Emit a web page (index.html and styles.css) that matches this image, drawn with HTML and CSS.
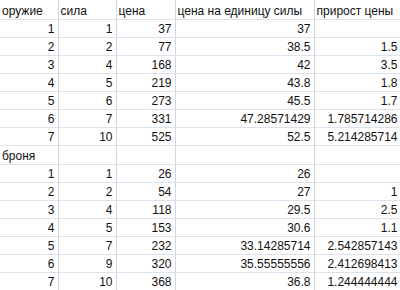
FILE: index.html
```html
<!DOCTYPE html>
<html>
<head>
<meta charset="utf-8">
<link rel="stylesheet" href="styles.css">
</head>
<body>
<table class="sheet">
  <colgroup>
    <col class="c1"><col class="c2"><col class="c3"><col class="c4"><col class="c5">
  </colgroup>
  <tbody>
    <tr class="head"><td class="t">оружие</td><td class="t">сила</td><td class="t">цена</td><td class="t">цена на единицу силы</td><td class="t">прирост цены</td></tr>
    <tr><td>1</td><td>1</td><td>37</td><td>37</td><td></td></tr>
    <tr><td>2</td><td>2</td><td>77</td><td>38.5</td><td>1.5</td></tr>
    <tr><td>3</td><td>4</td><td>168</td><td>42</td><td>3.5</td></tr>
    <tr><td>4</td><td>5</td><td>219</td><td>43.8</td><td>1.8</td></tr>
    <tr><td>5</td><td>6</td><td>273</td><td>45.5</td><td>1.7</td></tr>
    <tr><td>6</td><td>7</td><td>331</td><td>47.28571429</td><td>1.785714286</td></tr>
    <tr><td>7</td><td>10</td><td>525</td><td>52.5</td><td>5.214285714</td></tr>
    <tr><td class="t">броня</td><td></td><td></td><td></td><td></td></tr>
    <tr><td>1</td><td>1</td><td>26</td><td>26</td><td></td></tr>
    <tr><td>2</td><td>2</td><td>54</td><td>27</td><td>1</td></tr>
    <tr><td>3</td><td>4</td><td>118</td><td>29.5</td><td>2.5</td></tr>
    <tr><td>4</td><td>5</td><td>153</td><td>30.6</td><td>1.1</td></tr>
    <tr><td>5</td><td>7</td><td>232</td><td>33.14285714</td><td>2.542857143</td></tr>
    <tr><td>6</td><td>9</td><td>320</td><td>35.55555556</td><td>2.412698413</td></tr>
    <tr><td>7</td><td>10</td><td>368</td><td>36.8</td><td>1.244444444</td></tr>
  </tbody>
</table>
</body>
</html>
```
FILE: styles.css
```css
html, body {
  margin: 0;
  padding: 0;
  background: #ffffff;
  overflow: hidden;
}
.sheet {
  border-collapse: collapse;
  table-layout: fixed;
  width: 401px;
  font-family: "Liberation Sans", Arial, sans-serif;
  font-size: 12px;
  color: #111;
}
.c1 { width: 58px; }
.c2 { width: 58px; }
.c3 { width: 59px; }
.c4 { width: 139px; }
.c5 { width: 87px; }
.sheet td {
  height: 18.14px;
  padding: 0 3px 0 3px;
  box-sizing: border-box;
  text-align: right;
  vertical-align: bottom;
  line-height: 16px;
  white-space: nowrap;
  overflow: hidden;
  border-right: 1px solid #cfd7e4;
  border-bottom: 1px solid #dce2ec;
}
.sheet .head td {
  height: 19px;
}
.sheet td.t {
  text-align: left;
  padding-left: 2px;
}
```
